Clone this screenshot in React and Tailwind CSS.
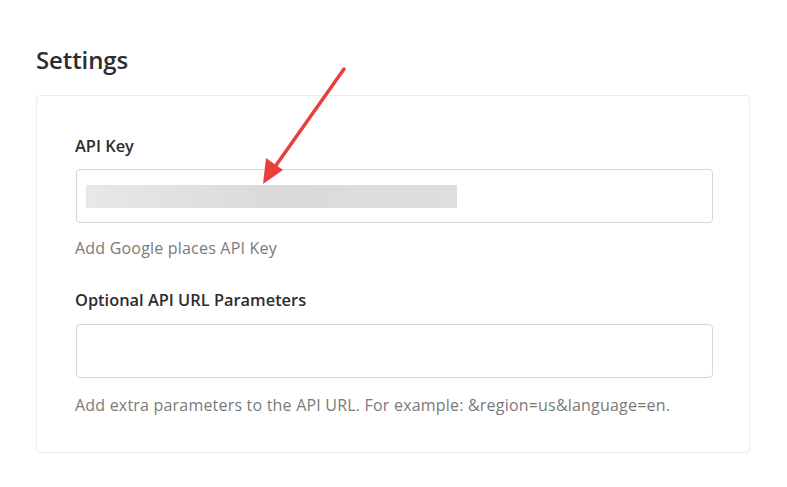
import React from "react";

const App = () => {
  return (
    <div className="relative w-[787px] h-[487px] bg-white font-['Open_Sans',sans-serif] text-[#333]">
      <div className="pl-[36px] pr-[37px] pt-[44px]">
        {/* Heading */}
        <h1 className="text-[24px] leading-[32px] font-semibold text-[#2d2d2d] tracking-[-0.1px]">Settings</h1>

        {/* Card */}
        <div className="mt-[19px] border border-[#ebebeb] rounded-[4px] pl-[38px] pr-[36px] pt-[38px] pb-[37px]">
          <label className="block text-[16.4px] leading-[24px] font-semibold text-[#2d2d2d]">API Key</label>
          <div className="mt-[11px] ml-[1px] h-[54px] border border-[#d6d6d6] rounded-[4px] flex items-center pl-[9px]">
            <div className="w-[371px] h-[23px] bg-gradient-to-r from-[#e8e8e8] via-[#dadada] to-[#dedede]"></div>
          </div>
          <p className="mt-[15px] text-[16px] leading-[20px] text-[#7a7a7a] tracking-[0.2px]">Add Google places API Key</p>

          <label className="block mt-[30px] text-[16.4px] leading-[24px] font-semibold text-[#2d2d2d]">
            Optional API URL Parameters
          </label>
          <div className="mt-[12px] ml-[1px] h-[54px] border border-[#d6d6d6] rounded-[4px]"></div>
          <p className="mt-[17px] text-[16px] leading-[20px] text-[#7a7a7a] tracking-[0.2px]">
            Add extra parameters to the API URL. For example: &amp;region=us&amp;language=en.
          </p>
        </div>
      </div>

      {/* Annotation arrow */}
      <svg className="absolute left-0 top-0" width="787" height="487" viewBox="0 0 787 487">
        <line x1="344" y1="69" x2="272" y2="171" stroke="#e8403f" strokeWidth="3.5" strokeLinecap="round" />
        <polygon points="263,184 266,158 283,170" fill="#e8403f" />
      </svg>
    </div>
  );
};

export default App;
